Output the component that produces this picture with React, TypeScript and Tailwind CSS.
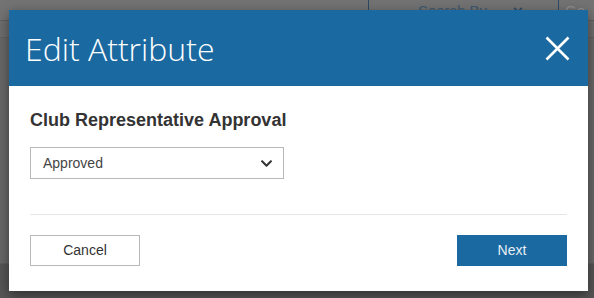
import React from 'react';
import { FaChevronDown } from 'react-icons/fa';

const App = () => {
  return (
    <div className="relative w-[594px] h-[298px] overflow-hidden bg-[#676767] font-['Liberation_Sans',Arial,sans-serif]">
      {/* dimmed page behind the dialog */}
      <div className="flex flex-col h-full">
        <div className="flex h-[21px] bg-[#737373] border-b border-[#5f5f5f]">
          <div className="w-[368px]" />
          <div className="flex items-center justify-center gap-3 w-[191px] border-x border-[#2f4a66] text-[15px] text-[#3d5870] leading-none">
            <span>-- Search By --</span>
            <FaChevronDown className="text-[10px] text-[#2f4a66]" />
          </div>
          <div className="pl-[6px] flex items-center text-[15px] text-[#8f8f8f] leading-none">Go</div>
        </div>
        <div className="h-[17px] bg-[#6e6e6e] border-b border-[#626262]" />
        <div className="flex-1 bg-[#686868]" />
        <div className="h-[35px] bg-[#565656] border-t border-[#5e5e5e]" />
      </div>

      <div className="absolute left-[9px] top-[10px] w-[579px] h-[281px] bg-white shadow-[0_4px_12px_rgba(0,0,0,0.45)] flex flex-col">
        <div className="flex items-center justify-between h-[76px] bg-[#1a69a0] pl-[16px] pr-[17px]">
          <h1 className="font-['Open_Sans',sans-serif] font-light text-[32px] text-white leading-none pt-[1px]">Edit Attribute</h1>
          <svg width="25" height="25" viewBox="0 0 25 25" className="mr-[1px]">
            <path d="M1.5 1.5 L23.5 23.5 M23.5 1.5 L1.5 23.5" stroke="white" strokeWidth="2.6" />
          </svg>
        </div>
        <div className="flex flex-col px-[21px] pt-[24px]">
          <h2 className="text-[18px] font-bold text-[#333333] leading-[21px]">Club Representative Approval</h2>
          <div className="mt-[16px] flex items-center justify-between w-[254px] h-[32px] border border-[#b8b8b8] pl-[12px] pr-[10px]">
            <span className="text-[14px] text-[#444444]">Approved</span>
            <FaChevronDown className="text-[13px] text-[#333333]" />
          </div>
          <div className="mt-[35px] h-px bg-[#e6e6e6]" />
          <div className="mt-[20px] flex justify-between">
            <button className="w-[110px] h-[31px] border border-[#b8b8b8] bg-white text-[14px] text-[#333333]">Cancel</button>
            <button className="w-[110px] h-[31px] bg-[#1a69a0] text-[14px] text-[#e8eef4]">Next</button>
          </div>
        </div>
      </div>
    </div>
  );
};

export default App;
